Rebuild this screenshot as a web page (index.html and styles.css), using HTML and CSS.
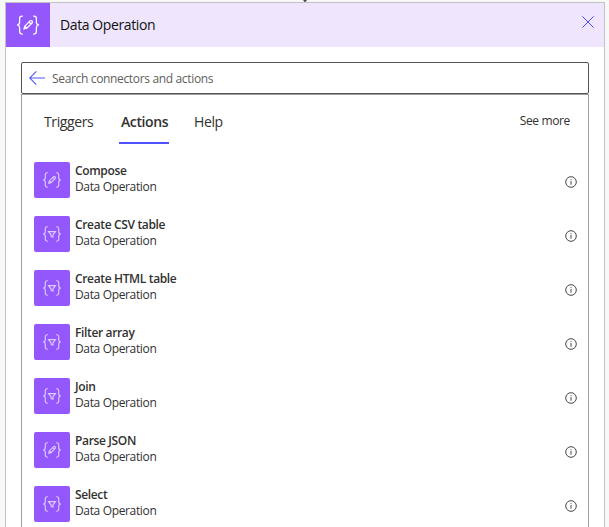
FILE: index.html
```html
<!DOCTYPE html>
<html lang="en">
<head>
<meta charset="utf-8">
<title>Data Operation</title>
<link rel="stylesheet" href="styles.css">
</head>
<body>
<svg class="defs" aria-hidden="true">
  <symbol id="braces" viewBox="0 0 24 20">
    <path d="M6.8 1H6Q3.6 1 3.6 3.4V7.2Q3.6 9.8 1 10Q3.6 10.2 3.6 12.8V16.6Q3.6 19 6 19H6.8M17.2 1H18Q20.4 1 20.4 3.4V7.2Q20.4 9.8 23 10Q20.4 10.2 20.4 12.8V16.6Q20.4 19 18 19H17.2"/>
  </symbol>
  <symbol id="compose" viewBox="0 0 24 20">
    <use href="#braces" width="24" height="20"/>
    <path d="M8 14L8.7 11.2L14 5.9Q15 5.1 16 6Q16.9 7 16.1 8L10.8 13.3ZM13 7L15 9M8.7 11.2L10.8 13.3"/>
  </symbol>
  <symbol id="filter" viewBox="0 0 24 20">
    <use href="#braces" width="24" height="20"/>
    <path d="M7.7 7H16.3L13.2 11V14L10.8 13V11Z"/>
  </symbol>
  <symbol id="info" viewBox="0 0 12 12">
    <circle cx="6" cy="6" r="5.3"/><path d="M6 5.1V8.7M6 3.2V4.2"/>
  </symbol>
</svg>
<div class="connector"></div>
<main class="card">
  <header class="header">
    <div class="header-icon"><svg><use href="#compose"/></svg></div>
    <h1>Data Operation</h1>
    <svg class="close" viewBox="0 0 12 12"><path d="M.3.3L11.7 11.7M11.7.3L.3 11.7"/></svg>
  </header>
  <div class="search">
    <svg class="back" viewBox="0 0 16 14"><path d="M7.3.4L.7 7L7.3 13.6M.7 7H16"/></svg>
    <span>Search connectors and actions</span>
  </div>
  <section class="panel">
    <nav class="tabs">
      <span class="tab triggers">Triggers</span>
      <span class="tab active">Actions</span>
      <span class="tab help">Help</span>
      <span class="more">See more</span>
    </nav>
    <div class="row"><div class="tile"><svg><use href="#compose"/></svg></div><div class="text"><b>Compose</b><span>Data Operation</span></div><svg class="info"><use href="#info"/></svg></div>
    <div class="row"><div class="tile"><svg><use href="#filter"/></svg></div><div class="text"><b>Create CSV table</b><span>Data Operation</span></div><svg class="info"><use href="#info"/></svg></div>
    <div class="row"><div class="tile"><svg><use href="#filter"/></svg></div><div class="text"><b>Create HTML table</b><span>Data Operation</span></div><svg class="info"><use href="#info"/></svg></div>
    <div class="row"><div class="tile"><svg><use href="#filter"/></svg></div><div class="text"><b>Filter array</b><span>Data Operation</span></div><svg class="info"><use href="#info"/></svg></div>
    <div class="row"><div class="tile"><svg><use href="#filter"/></svg></div><div class="text"><b>Join</b><span>Data Operation</span></div><svg class="info"><use href="#info"/></svg></div>
    <div class="row"><div class="tile"><svg><use href="#compose"/></svg></div><div class="text"><b>Parse JSON</b><span>Data Operation</span></div><svg class="info"><use href="#info"/></svg></div>
    <div class="row"><div class="tile"><svg><use href="#filter"/></svg></div><div class="text"><b>Select</b><span>Data Operation</span></div><svg class="info"><use href="#info"/></svg></div>
  </section>
</main>
</body>
</html>
```
FILE: styles.css
```css
* { box-sizing: border-box; }
body {
  margin: 0;
  height: 527px;
  overflow: hidden;
  padding: 2px 4px 0 5px;
  background: #f8f8f8;
  color: #323130;
  font-family: "Open Sans", "Noto Sans", sans-serif;
}
svg { display: block; fill: none; stroke: currentColor; flex: none; }
.defs { position: absolute; width: 0; height: 0; }
.connector {
  position: absolute;
  left: 303px;
  top: 0;
  width: 4px;
  height: 2px;
  background: #484848;
  clip-path: polygon(0 0, 100% 0, 60% 100%, 40% 100%);
}
.card {
  height: 540px;
  border: 1px solid #c3c2c2;
  background: #fff;
}
.header {
  display: flex;
  height: 44px;
  background: #efe6fe;
}
.header-icon, .tile {
  display: grid;
  place-items: center;
  background: #9457fb;
  color: #fff;
}
.header-icon { width: 44px; }
.header-icon svg { width: 24px; height: 20px; stroke-width: 1.25; }
h1 {
  margin: 0 0 0 10px;
  font-size: 14px;
  font-weight: 400;
  line-height: 44px;
  letter-spacing: -.4px;
  color: #111;
}
.close {
  width: 12px;
  height: 12px;
  margin: 13px 10px 0 auto;
  color: #4b4df0;
  stroke-width: 1;
}
.search {
  display: flex;
  align-items: center;
  gap: 7px;
  width: 568px;
  height: 32px;
  margin: 15px 0 0 15px;
  padding-left: 7px;
  border: 1px solid #555352;
  border-radius: 2px;
  font-size: 12px;
  letter-spacing: -.34px;
  color: #605e5c;
}
.back { width: 16px; height: 14px; color: #5558f5; stroke-width: 1.1; }
.panel {
  width: 568px;
  height: 450px;
  margin-left: 15px;
  border: 1px solid #a19f9d;
}
.tabs {
  display: flex;
  height: 49px;
  margin-bottom: 10px;
  padding: 5px 18px 0 22px;
  font-size: 14px;
}
.tab {
  flex: none;
  height: 44px;
  line-height: 44px;
  letter-spacing: -.4px;
  white-space: nowrap;
}
.triggers { width: 50px; margin-right: 25px; }
.active {
  width: 50px;
  margin-right: 25px;
  padding-left: 2px;
  border-bottom: 2px solid #4f52ff;
  font-weight: 600;
}
.more { margin-left: auto; font-size: 12px; line-height: 42px; letter-spacing: -.36px; }
.row {
  display: flex;
  height: 54px;
  padding: 8px 11.5px 0 12px;
}
.tile { width: 36px; height: 36px; border-radius: 2px; }
.tile svg { width: 20px; height: 16px; opacity: .7; stroke-width: 1.4; }
.text {
  display: flex;
  flex-direction: column;
  margin: 1px 0 0 5px;
  font-size: 12px;
  line-height: 16px;
}
.text b { font-weight: 600; letter-spacing: -.35px; }
.text span { letter-spacing: -.35px; }
.info { width: 12px; height: 12px; margin: 13.5px 0 0 auto; stroke-width: .9; }
```
